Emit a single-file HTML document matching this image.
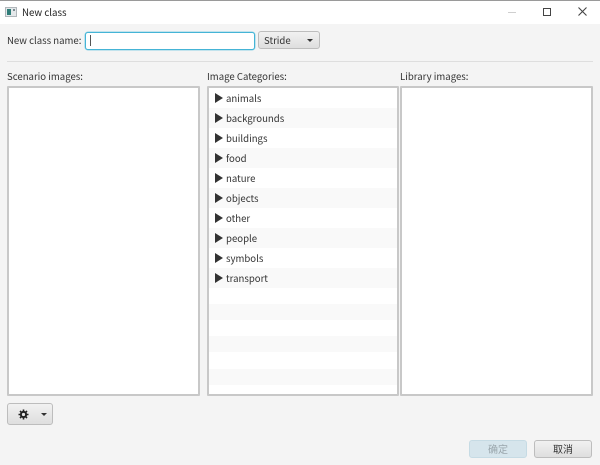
<!DOCTYPE html>
<html><head><meta charset="utf-8"><style>
html,body{margin:0;padding:0}
body{width:600px;height:465px;overflow:hidden;background:#f4f4f4;position:relative;font-family:"Noto Sans CJK SC","Liberation Sans",sans-serif;font-size:9.6px;color:#333}
#w{position:absolute;left:0;top:0;width:600px;height:465px;filter:blur(0.3px)}
.a{position:absolute;white-space:nowrap}
.t{line-height:14px;height:14px}
.panel{position:absolute;top:86px;height:306px;background:#fff;border:2px solid #c8c8c8;border-radius:1px}
.btn{position:absolute;box-sizing:border-box;border:1px solid #bdbdbd;border-radius:3px;background:linear-gradient(#f1f1f1,#dedede)}
.row{position:absolute;left:209px;width:188px}
.g{background:#f9f9f9}
.tri{position:absolute;left:215px;width:0;height:0;border-left:8px solid #333;border-top:5px solid transparent;border-bottom:5px solid transparent}
.lab{position:absolute;left:226px;line-height:14px;color:#333}
</style></head><body><div id="w">
<div class="a" style="left:0;top:0;width:600px;height:24px;background:#fff"></div>
<div class="a" style="left:0;top:0;width:600px;height:1px;background:#9a9a9a"></div>
<svg class="a" style="left:5px;top:7px" width="12" height="11" viewBox="0 0 12 11"><rect x="0.5" y="0.5" width="11" height="9" fill="#e4e8ea" stroke="#b0b6ba"/><rect x="2" y="2" width="4" height="6" fill="#2f7d78"/><rect x="8" y="2" width="2" height="2" fill="#7b8a90"/></svg>
<div class="a t" style="left:22px;top:5px;color:#222;font-size:9.7px">New class</div>
<div class="a" style="left:508px;top:12px;width:8px;height:1px;background:#cfcfcf"></div>
<div class="a" style="left:543px;top:8px;width:6px;height:6px;border:1.5px solid #444"></div>
<svg class="a" style="left:577px;top:6px" width="11" height="11" viewBox="0 0 11 11"><path d="M1.5 1.5L9.5 9.5M9.5 1.5L1.5 9.5" stroke="#444" stroke-width="1.1" fill="none"/></svg>

<div class="a t" style="left:7px;top:33px">New class name:</div>
<div class="a" style="left:85px;top:32px;width:168px;height:16px;background:#fff;border:1px solid #45b4d6;border-radius:3px;box-shadow:0 0 0 0.5px #8fd2e6"></div>
<div class="a" style="left:90px;top:35px;width:1px;height:11px;background:#555"></div>
<div class="btn" style="left:258px;top:31px;width:62px;height:18px"></div>
<div class="a t" style="left:264px;top:33px">Stride</div>
<div class="a" style="left:307px;top:39px;width:0;height:0;border-top:3px solid #333;border-left:3px solid transparent;border-right:3px solid transparent"></div>
<div class="a" style="left:7px;top:61px;width:586px;height:1px;background:#dedede"></div>

<div class="a t" style="left:7px;top:69px">Scenario images:</div>
<div class="a t" style="left:207px;top:69px">Image Categories:</div>
<div class="a t" style="left:400px;top:69px">Library images:</div>

<div class="panel" style="left:7px;width:189px"></div>
<div class="panel" style="left:207px;width:188px"></div>
<div class="panel" style="left:400px;width:189px"></div>

<div class="row g" style="top:108px;height:20px"></div>
<div class="row g" style="top:148px;height:20px"></div>
<div class="row g" style="top:188px;height:20px"></div>
<div class="row g" style="top:228px;height:20px"></div>
<div class="row g" style="top:268px;height:20px"></div>
<div class="row g" style="top:304px;height:16px"></div>
<div class="row g" style="top:336px;height:16px"></div>
<div class="row g" style="top:369px;height:16px"></div>

<div class="tri" style="top:93px"></div><div class="lab" style="top:91px">animals</div>
<div class="tri" style="top:113px"></div><div class="lab" style="top:111px">backgrounds</div>
<div class="tri" style="top:133px"></div><div class="lab" style="top:131px">buildings</div>
<div class="tri" style="top:153px"></div><div class="lab" style="top:151px">food</div>
<div class="tri" style="top:173px"></div><div class="lab" style="top:171px">nature</div>
<div class="tri" style="top:193px"></div><div class="lab" style="top:191px">objects</div>
<div class="tri" style="top:213px"></div><div class="lab" style="top:211px">other</div>
<div class="tri" style="top:233px"></div><div class="lab" style="top:231px">people</div>
<div class="tri" style="top:253px"></div><div class="lab" style="top:251px">symbols</div>
<div class="tri" style="top:273px"></div><div class="lab" style="top:271px">transport</div>

<div class="btn" style="left:7px;top:403px;width:46px;height:22px"></div>
<svg class="a" style="left:18px;top:409px" width="11" height="11" viewBox="0 0 11 11"><circle cx="5.5" cy="5.5" r="2.6" fill="none" stroke="#222" stroke-width="2"/><path d="M5.5 .5V2.5M5.5 8.5V10.5M.5 5.5H2.5M8.5 5.5H10.5M2 2L3.3 3.3M7.7 7.7L9 9M9 2L7.7 3.3M3.3 7.7L2 9" stroke="#222" stroke-width="1.6"/></svg>
<div class="a" style="left:41px;top:413px;width:0;height:0;border-top:3px solid #333;border-left:3px solid transparent;border-right:3px solid transparent"></div>

<div class="btn" style="left:469px;top:440px;width:58px;height:18px;background:#d6e5ec;border-color:#c6dbe4"></div>
<div class="a t" style="left:469px;top:442px;width:58px;text-align:center;color:#9aa6ac;font-size:10px">确定</div>
<div class="btn" style="left:534px;top:440px;width:58px;height:18px"></div>
<div class="a t" style="left:534px;top:442px;width:58px;text-align:center;font-size:10px">取消</div>
</div></body></html>
